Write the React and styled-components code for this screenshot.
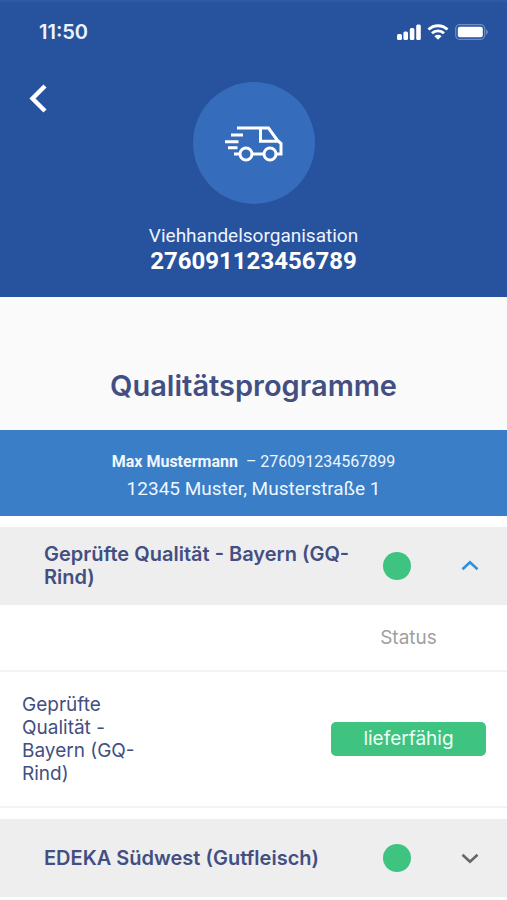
import React, { useState } from "react";
import styled, { createGlobalStyle } from "styled-components";

const GlobalStyle = createGlobalStyle`
  *, *::before, *::after { box-sizing: border-box; }
  body {
    margin: 0;
    background: #ffffff;
    font-family: Inter, "Liberation Sans", sans-serif;
    color: #434f82;
  }
`;

const Header = styled.header`
  display: flex;
  flex-direction: column;
  padding-bottom: 22px;
  border-top: 2px solid #2f5ba5;
  background: #27529d;
  color: #ffffff;
`;

const StatusBar = styled.div`
  display: flex;
  align-items: center;
  justify-content: space-between;
  height: 60px;
  padding: 0 18px 0 39px;
`;

const Clock = styled.time`
  font-size: 20px;
  font-weight: 600;
  line-height: 24px;
  color: #eef4ff;
`;

const StatusIcons = styled.div`
  display: flex;
  align-items: center;
  gap: 6px;
`;

const HeroRow = styled.div`
  display: grid;
  grid-template-columns: 1fr auto 1fr;
  align-items: start;
  padding: 20px 24px 0;
`;

const BackButton = styled.button`
  display: flex;
  justify-self: start;
  padding: 0;
  border: 0;
  background: none;
  color: inherit;
  cursor: pointer;
`;

const VanBadge = styled.div`
  display: flex;
  align-items: center;
  justify-content: center;
  width: 122px;
  height: 122px;
  border-radius: 50%;
  background: #356cbb;
`;

const OrgType = styled.p`
  margin: 20px 0 0;
  font-family: Roboto, sans-serif;
  font-size: 19px;
  line-height: 24px;
  text-align: center;
  color: #eef4ff;
`;

const OrgNumber = styled.p`
  margin: 0;
  font-family: Roboto, sans-serif;
  font-size: 24px;
  font-weight: 700;
  line-height: 27px;
  text-align: center;
`;

const TitleSection = styled.section`
  padding: 72px 16px 27px;
  background: #fafafa;
`;

const Title = styled.h1`
  margin: 0;
  font-size: 29px;
  font-weight: 600;
  line-height: 34px;
  text-align: center;
`;

const Owner = styled.section`
  padding: 18px 16px 14px;
  background: #3a7ec7;
  font-family: Roboto, sans-serif;
  text-align: center;
  color: #eef6ff;
`;

const OwnerName = styled.p`
  display: flex;
  justify-content: center;
  gap: 8px;
  margin: 0;
  font-size: 16px;
  line-height: 27px;
`;

const OwnerAddress = styled.p`
  margin: 0;
  font-size: 19px;
  line-height: 27px;
`;

const Programmes = styled.main`
  display: flex;
  flex-direction: column;
  gap: 11px;
  padding-top: 11px;
`;

const ProgrammeHeading = styled.h2`
  margin: 0;
`;

const Toggle = styled.button`
  display: grid;
  grid-template-columns: 1fr auto auto;
  align-items: center;
  gap: 22px;
  width: 100%;
  min-height: 78px;
  padding: 16px 25px 16px 44px;
  border: 0;
  background: #eeeeee;
  font: inherit;
  font-size: 20px;
  font-weight: 600;
  line-height: 23px;
  text-align: left;
  color: inherit;
  cursor: pointer;
`;

const Dot = styled.span`
  width: 28px;
  height: 28px;
  margin-right: 25px;
  border-radius: 50%;
  background: #3ec381;
`;

const ToggleIcon = styled.svg`
  display: block;
  color: ${({ $open }) => ($open ? "#2f8fe0" : "#666666")};
  transform: ${({ $open }) => ($open ? "rotate(180deg)" : "none")};
`;

const StatusTable = styled.table`
  width: 100%;
  border-collapse: collapse;
  table-layout: fixed;
  font-size: 19px;
  line-height: 23px;
`;

const NameColumn = styled.col`
  width: 32%;
`;

const HeadCell = styled.th`
  height: 66px;
  padding: 0 21px;
  border-bottom: 2px solid #f3f3f3;
  font-weight: 400;
  color: #a0a0a0;
`;

const StatusLabel = styled.span`
  display: block;
  width: 155px;
  margin-left: auto;
  text-align: center;
`;

const Cell = styled.td`
  padding: ${({ $wide }) => ($wide ? "21px" : "21px 0 21px 22px")};
  border-bottom: 2px solid #f3f3f3;
`;

const StatusBadge = styled(StatusLabel)`
  padding: 5px 8px 6px;
  border-radius: 5px;
  background: #3ec381;
  color: #eefff5;
`;

function SignalIcon() {
  return (
    <svg width="24" height="16" viewBox="0 0 24 16" fill="#fff" aria-hidden="true">
      <rect x="0" y="10" width="5" height="6" rx="1.5" />
      <rect x="6.4" y="7.5" width="4.6" height="8.5" rx="1.5" />
      <rect x="12.8" y="4" width="4.6" height="12" rx="1.5" />
      <rect x="19.2" y="0.5" width="4.6" height="15.5" rx="1.5" />
    </svg>
  );
}

function WifiIcon() {
  return (
    <svg width="22" height="16" viewBox="0 0 22 16" aria-hidden="true">
      <g fill="none" stroke="#fff" strokeWidth="2.8">
        <path d="M1.5 5.6a13.6 13.6 0 0 1 19 0" />
        <path d="M5 9.3a8.5 8.5 0 0 1 12 0" />
      </g>
      <path d="M11 15.8 7.4 12.2a5.1 5.1 0 0 1 7.2 0z" fill="#fff" />
    </svg>
  );
}

function BatteryIcon() {
  return (
    <svg width="34" height="16" viewBox="0 0 34 16" aria-hidden="true">
      <rect x="0.7" y="0.7" width="29" height="14.6" rx="4" fill="none" stroke="#6d8dc4" strokeWidth="1.3" />
      <rect x="2.8" y="2.8" width="25" height="10.4" rx="2" fill="#fff" />
      <path d="M31 5.4c2.4.8 2.4 4.4 0 5.2z" fill="#6d8dc4" />
    </svg>
  );
}

function BackIcon() {
  return (
    <svg width="28" height="34" viewBox="0 0 28 34" aria-hidden="true">
      <path d="M21 4 8.5 16.5 21 29" fill="none" stroke="#fff" strokeWidth="4.4" />
    </svg>
  );
}

function VanIcon() {
  return (
    <svg width="60" height="38" viewBox="0 0 60 38" fill="none" stroke="#fff" strokeWidth="3" aria-hidden="true">
      <path d="M13 4h31.500l9 12.500 3.500 3v10.500h-5M36.500 4v13.200h17.500M40 30H28M16 30H10" />
      <path d="M7 11h12M1 17.700h13.500M4 23.700h9.500" />
      <circle cx="22" cy="30" r="6" />
      <circle cx="46" cy="30" r="6" />
    </svg>
  );
}

const programmes = [
  {
    id: "gq-rind",
    name: "Geprüfte Qualität - Bayern (GQ-Rind)",
    status: "lieferfähig",
  },
  {
    id: "edeka",
    name: "EDEKA Südwest (Gutfleisch)",
    status: "lieferfähig",
  },
];

function Programme({ id, name, status, defaultOpen }) {
  const [open, setOpen] = useState(defaultOpen);
  return (
    <section>
      <ProgrammeHeading>
        <Toggle
          type="button"
          aria-expanded={open}
          aria-controls={id}
          onClick={() => setOpen(!open)}
        >
          <span>{name}</span>
          <Dot />
          <ToggleIcon $open={open} width="24" height="24" viewBox="0 0 24 24" aria-hidden="true">
            <path d="m4.500 8.800 7.500 7 7.500-7" fill="none" stroke="currentColor" strokeWidth="2.600" />
          </ToggleIcon>
        </Toggle>
      </ProgrammeHeading>
      <div id={id} hidden={!open}>
        <StatusTable>
          <colgroup>
            <NameColumn />
            <col />
          </colgroup>
          <thead>
            <tr>
              <HeadCell as="td" />
              <HeadCell scope="col">
                <StatusLabel>Status</StatusLabel>
              </HeadCell>
            </tr>
          </thead>
          <tbody>
            <tr>
              <Cell>{name}</Cell>
              <Cell $wide>
                <StatusBadge>{status}</StatusBadge>
              </Cell>
            </tr>
          </tbody>
        </StatusTable>
      </div>
    </section>
  );
}

export default function App() {
  return (
    <>
      <GlobalStyle />
      <Header>
        <StatusBar>
          <Clock>11:50</Clock>
          <StatusIcons>
            <SignalIcon />
            <WifiIcon />
            <BatteryIcon />
          </StatusIcons>
        </StatusBar>
        <HeroRow>
          <BackButton type="button" aria-label="Zurück">
            <BackIcon />
          </BackButton>
          <VanBadge>
            <VanIcon />
          </VanBadge>
        </HeroRow>
        <OrgType>Viehhandelsorganisation</OrgType>
        <OrgNumber>276091123456789</OrgNumber>
      </Header>
      <TitleSection>
        <Title>Qualitätsprogramme</Title>
      </TitleSection>
      <Owner>
        <OwnerName>
          <strong>Max Mustermann</strong>
          <span>– 276091234567899</span>
        </OwnerName>
        <OwnerAddress>12345 Muster, Musterstraße 1</OwnerAddress>
      </Owner>
      <Programmes>
        {programmes.map((programme, index) => (
          <Programme key={programme.id} {...programme} defaultOpen={index === 0} />
        ))}
      </Programmes>
    </>
  );
}
